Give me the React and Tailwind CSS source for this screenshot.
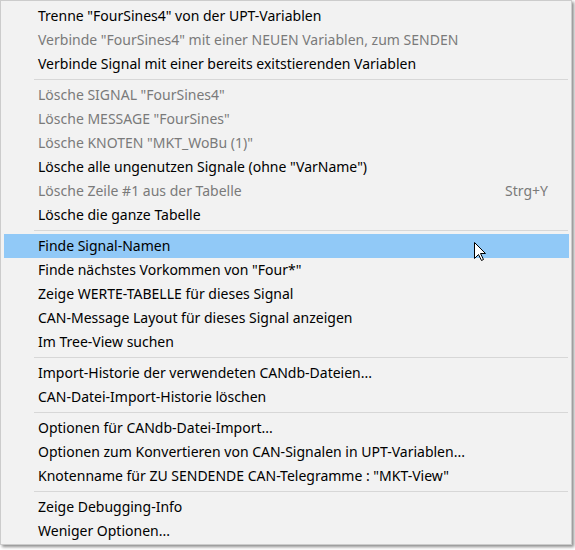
import React from "react";

const groups = [
  [
    { label: 'Trenne "FourSines4" von der UPT-Variablen' },
    { label: 'Verbinde "FourSines4" mit einer NEUEN Variablen, zum SENDEN', disabled: true },
    { label: "Verbinde Signal mit einer bereits exitstierenden Variablen" },
  ],
  [
    { label: 'Lösche SIGNAL "FourSines4"', disabled: true },
    { label: 'Lösche MESSAGE "FourSines"', disabled: true },
    { label: 'Lösche KNOTEN "MKT_WoBu (1)"', disabled: true },
    { label: 'Lösche alle ungenutzen Signale (ohne "VarName")' },
    { label: "Lösche Zeile #1 aus der Tabelle", disabled: true, shortcut: "Strg+Y" },
    { label: "Lösche die ganze Tabelle" },
  ],
  [
    { label: "Finde Signal-Namen", active: true },
    { label: 'Finde nächstes Vorkommen von "Four*"' },
    { label: "Zeige WERTE-TABELLE für dieses Signal" },
    { label: "CAN-Message Layout für dieses Signal anzeigen" },
    { label: "Im Tree-View suchen" },
  ],
  [
    { label: "Import-Historie der verwendeten CANdb-Dateien..." },
    { label: "CAN-Datei-Import-Historie löschen" },
  ],
  [
    { label: "Optionen für CANdb-Datei-Import..." },
    { label: "Optionen zum Konvertieren von CAN-Signalen in UPT-Variablen..." },
    { label: 'Knotenname für ZU SENDENDE CAN-Telegramme : "MKT-View"' },
  ],
  [
    { label: "Zeige Debugging-Info" },
    { label: "Weniger Optionen..." },
  ],
];

function MenuItem({ item }) {
  return (
    <div
      className={
        "relative flex h-[24px] items-center justify-between pl-[34px] pr-[21px] " +
        (item.active ? "bg-[#91c9f7] " : "") +
        (item.disabled ? "text-[#7a7a7a]" : "text-black")
      }
    >
      <span className="whitespace-nowrap">{item.label}</span>
      {item.shortcut && <span className="whitespace-nowrap">{item.shortcut}</span>}
      {item.active && (
        <svg
          className="absolute left-[470px] top-[8px]"
          width="13"
          height="20"
          viewBox="0 0 13 20"
        >
          <path
            d="M0.5 0.5 L0.5 16.5 L4.5 12.5 L7.5 18.5 L9.5 17.5 L6.5 11.5 L11.5 11.5 Z"
            fill="#fff"
            stroke="#000"
            strokeWidth="1"
            strokeLinejoin="miter"
          />
        </svg>
      )}
    </div>
  );
}

export default function App() {
  return (
    <div className="h-[550px] w-[575px] bg-white font-['Noto_Sans',sans-serif] text-[14px] leading-none">
      <div className="box-border w-[572px] border border-[#cccccc] bg-[#f2f2f2] pl-[3px] pr-[2px] pt-[3px] pb-[1px] shadow-[2px_2px_3px_rgba(0,0,0,0.45)]">
        {groups.map((group, gi) => (
          <div key={gi}>
            {gi > 0 && (
              <div className="flex h-[7px] items-center pl-[30px] pr-[1px]">
                <div className="h-px w-full bg-[#d7d7d7]" />
              </div>
            )}
            {group.map((item, i) => (
              <MenuItem key={i} item={item} />
            ))}
          </div>
        ))}
      </div>
    </div>
  );
}
